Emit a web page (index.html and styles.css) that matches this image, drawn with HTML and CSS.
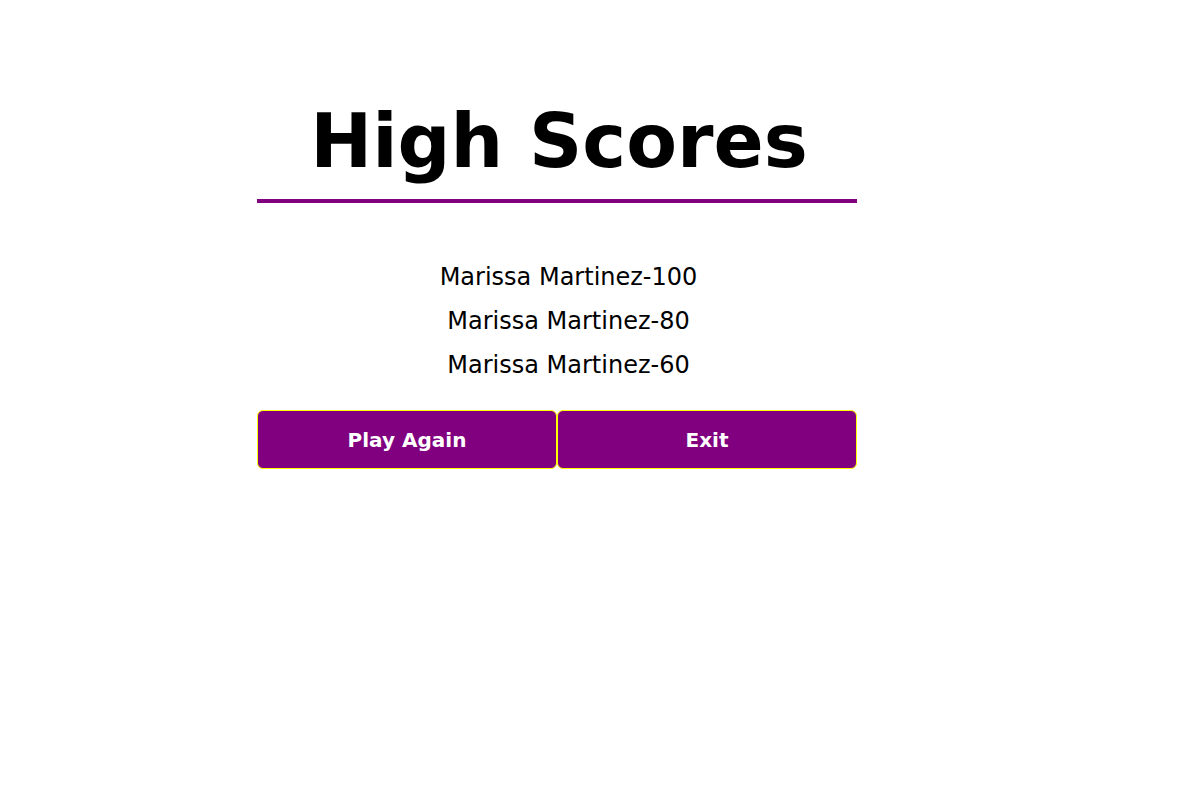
FILE: index.html
```html
<!DOCTYPE html>
<html lang="en">
<head>
<meta charset="utf-8">
<title>High Scores</title>
<link rel="stylesheet" href="styles.css">
</head>
<body>
<main class="page">
  <section class="panel">
    <h1 class="title">High Scores</h1>
    <ul class="scores">
      <li class="score">Marissa Martinez-100</li>
      <li class="score">Marissa Martinez-80</li>
      <li class="score">Marissa Martinez-60</li>
    </ul>
    <div class="actions">
      <button class="btn" type="button">Play Again</button>
      <button class="btn" type="button">Exit</button>
    </div>
  </section>
</main>
</body>
</html>
```
FILE: styles.css
```css
html, body {
  margin: 0;
  padding: 0;
  background: #ffffff;
}

body {
  font-family: "DejaVu Sans", Verdana, sans-serif;
  color: #000000;
}

.page {
  padding-left: 257px;
}

.panel {
  width: 600px;
  display: flex;
  flex-direction: column;
}

.title {
  margin: 98px 0 0 0;
  padding: 0 0 15px 4px;
  font-size: 74px;
  line-height: 86px;
  font-weight: bold;
  text-align: center;
  border-bottom: 4px solid #800080;
}

.scores {
  list-style: none;
  margin: 60px 0 0 0;
  padding: 0 0 0 23px;
  display: flex;
  flex-direction: column;
  gap: 16px;
}

.score {
  font-size: 24px;
  line-height: 28px;
  text-align: center;
}

.actions {
  display: flex;
  margin-top: 31px;
}

.btn {
  width: 300px;
  height: 59px;
  box-sizing: border-box;
  background: #800080;
  color: #ffffff;
  border: 1px solid #ffff00;
  border-radius: 6px;
  font-family: "DejaVu Sans", Verdana, sans-serif;
  font-size: 20px;
  font-weight: bold;
  padding: 0;
  cursor: pointer;
}
```
